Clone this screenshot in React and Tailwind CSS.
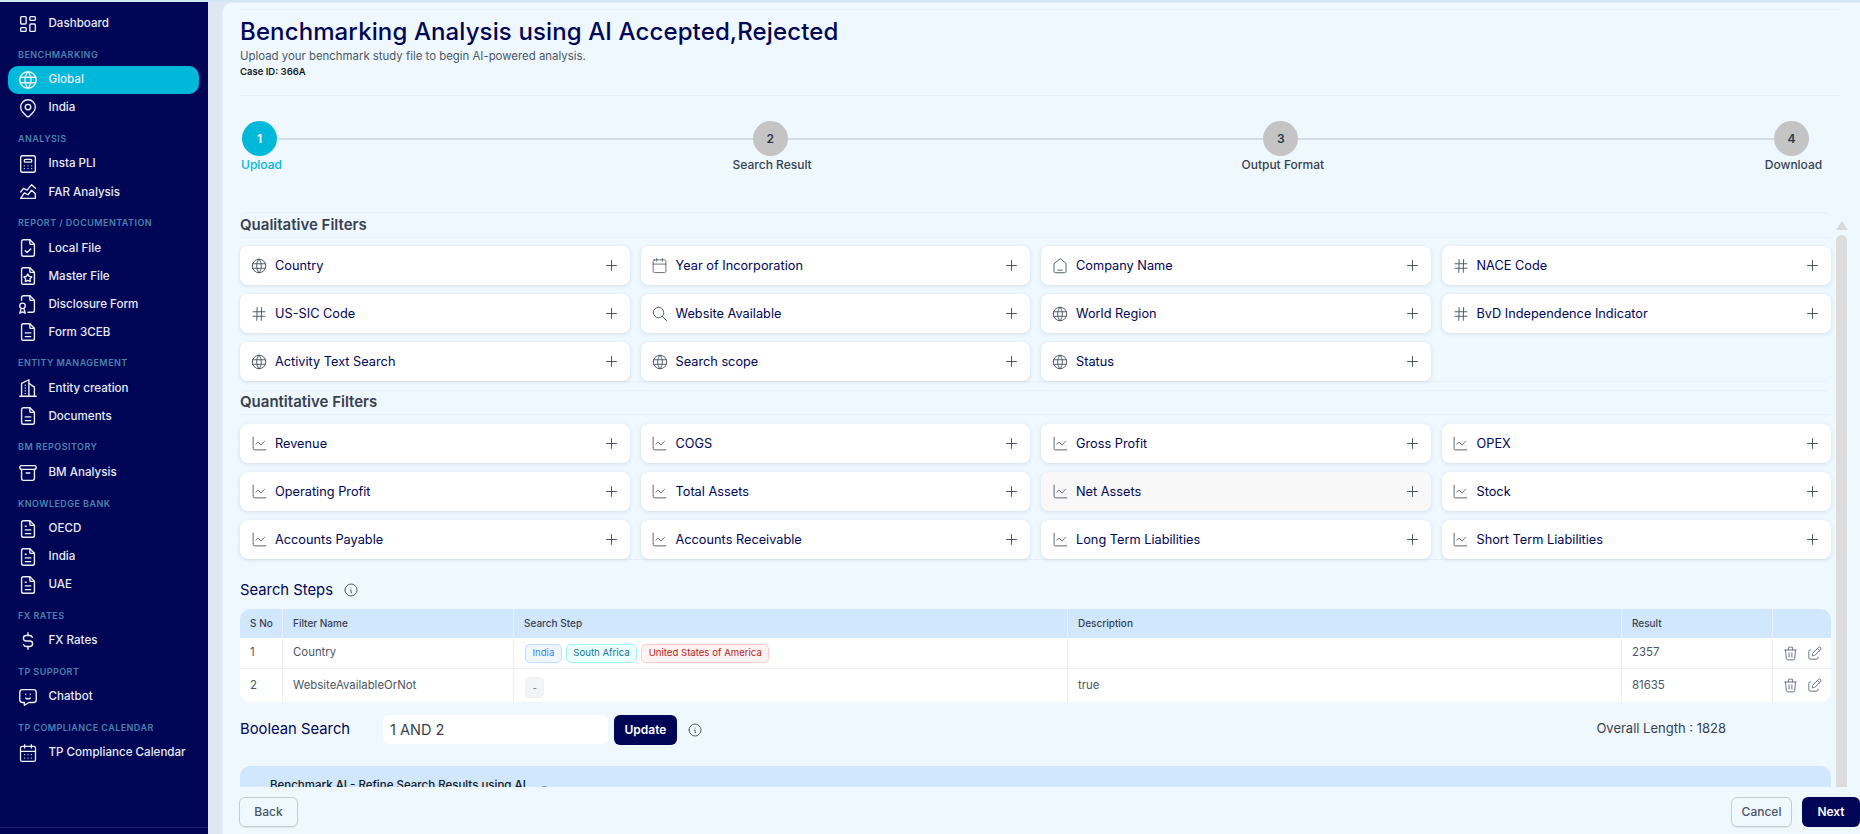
import {
  TbLayoutDashboard, TbWorld, TbMapPin, TbCalculator, TbChartAreaLine, TbFileCheck, TbFileStar,
  TbFileCertificate, TbFileDescription, TbBuildingSkyscraper, TbArchive, TbFileText, TbCurrencyDollar,
  TbMessageChatbot, TbSearch, TbPlus, TbTrash, TbEdit, TbInfoCircle, TbChevronDown,
} from "react-icons/tb";
import { Calendar, CalendarDays, ChartLine } from "lucide-react";

function HashIcon({ className }) {
  return (
    <svg width="18" height="18" viewBox="0 0 24 24" fill="none" stroke="currentColor" strokeWidth="1.25" strokeLinecap="round" className={className}>
      <path d="M4 9h16M4 15h16M9.5 3.5l-.5 17M15.5 3.5l-.5 17" />
    </svg>
  );
}

function HouseIcon({ className }) {
  return (
    <svg width="18" height="18" viewBox="0 0 24 24" fill="none" stroke="currentColor" strokeWidth="1.25" strokeLinejoin="round" strokeLinecap="round" className={className}>
      <path d="M12 2.5 4 9v10a2 2 0 0 0 2 2h12a2 2 0 0 0 2-2V9z" />
      <path d="M9 17.5h6" />
    </svg>
  );
}

function CalendarIcon({ className }) {
  return <Calendar size={17} strokeWidth={1.15} className={className} />;
}

function ChartIcon({ className }) {
  return <ChartLine size={17} strokeWidth={1.25} className={className} />;
}

function ComplianceIcon({ size, strokeWidth, className }) {
  return (
    <span className="w-[22px] h-[22px] shrink-0 flex items-center justify-center">
      <CalendarDays size={size - 2} strokeWidth={strokeWidth} className={className} />
    </span>
  );
}

const NAV = [
  { items: [{ label: "Dashboard", icon: TbLayoutDashboard }] },
  { title: "BENCHMARKING", items: [{ label: "Global", icon: TbWorld, active: true }, { label: "India", icon: TbMapPin }] },
  { title: "ANALYSIS", items: [{ label: "Insta PLI", icon: TbCalculator }, { label: "FAR Analysis", icon: TbChartAreaLine }] },
  {
    title: "REPORT / DOCUMENTATION",
    items: [
      { label: "Local File", icon: TbFileCheck },
      { label: "Master File", icon: TbFileStar },
      { label: "Disclosure Form", icon: TbFileCertificate },
      { label: "Form 3CEB", icon: TbFileDescription },
    ],
  },
  { title: "ENTITY MANAGEMENT", items: [{ label: "Entity creation", icon: TbBuildingSkyscraper }, { label: "Documents", icon: TbFileDescription }] },
  { title: "BM REPOSITORY", items: [{ label: "BM Analysis", icon: TbArchive }] },
  { title: "KNOWLEDGE BANK", items: [{ label: "OECD", icon: TbFileText }, { label: "India", icon: TbFileText }, { label: "UAE", icon: TbFileText }] },
  { title: "FX RATES", items: [{ label: "FX Rates", icon: TbCurrencyDollar }] },
  { title: "TP SUPPORT", items: [{ label: "Chatbot", icon: TbMessageChatbot }] },
  { title: "TP COMPLIANCE CALENDAR", items: [{ label: "TP Compliance Calendar", icon: ComplianceIcon }] },
];

const STEPS = [
  { n: 1, label: "Upload", active: true },
  { n: 2, label: "Search Result" },
  { n: 3, label: "Output Format" },
  { n: 4, label: "Download" },
];

const QUALITATIVE = [
  { label: "Country", icon: TbWorld },
  { label: "Year of Incorporation", icon: CalendarIcon },
  { label: "Company Name", icon: HouseIcon },
  { label: "NACE Code", icon: HashIcon },
  { label: "US-SIC Code", icon: HashIcon },
  { label: "Website Available", icon: TbSearch },
  { label: "World Region", icon: TbWorld },
  { label: "BvD Independence Indicator", icon: HashIcon },
  { label: "Activity Text Search", icon: TbWorld },
  { label: "Search scope", icon: TbWorld },
  { label: "Status", icon: TbWorld },
];

const QUANTITATIVE = [
  "Revenue", "COGS", "Gross Profit", "OPEX",
  "Operating Profit", "Total Assets", "Net Assets", "Stock",
  "Accounts Payable", "Accounts Receivable", "Long Term Liabilities", "Short Term Liabilities",
];

function Sidebar() {
  return (
    <aside className="w-[208px] shrink-0 h-full bg-[#000555] relative pt-[8px] pl-[8px] pr-[9px] font-['Inter',sans-serif]">
      {NAV.map((group, i) => (
        <div key={i}>
          {group.title && (
            <div className="h-[28.04px] pt-[11px] pl-[10px] text-[9px] leading-[12px] font-semibold tracking-[0.05em] text-[#4b82ad] whitespace-nowrap">
              {group.title}
            </div>
          )}
          {group.items.map((item) => {
            const Icon = item.icon;
            return (
              <div
                key={item.label}
                className={`h-[28.04px] flex items-center pl-[9px] rounded-[10px] ${item.active ? "bg-[#00b8d9]" : ""}`}
              >
                <Icon size={22} strokeWidth={1.5} className="text-[#eef1fa] shrink-0" />
                <span className="ml-[9.5px] text-[11.6px] font-medium text-[#e8ecf8] whitespace-nowrap">{item.label}</span>
              </div>
            );
          })}
        </div>
      ))}
      <div className="absolute left-0 right-0 bottom-[6px] h-px bg-[#1a2070]" />
    </aside>
  );
}

function Stepper() {
  return (
    <div className="relative w-[1567px] h-[60px] mt-[25px] ml-[19px]">
      <div className="absolute left-[18px] right-[18px] top-[17px] h-[2px] bg-[#d3dbe5]" />
      <div className="relative flex justify-between">
        {STEPS.map((s) => (
          <div key={s.n} className="flex flex-col items-center w-[35px]">
            <div
              className={`w-[35px] h-[35px] shrink-0 rounded-full flex items-center justify-center text-[12px] font-semibold ${
                s.active ? "bg-[#00b8d9] text-white" : "bg-[#c4c4c4] text-[#2d3748]"
              }`}
            >
              {s.n}
            </div>
            <div className={`ml-[4px] mt-[1px] text-[12px] leading-[16px] font-medium whitespace-nowrap ${s.active ? "text-[#00b8d9]" : "text-[#374151]"}`}>
              {s.label}
            </div>
          </div>
        ))}
      </div>
    </div>
  );
}

function FilterCard({ label, icon: Icon, hover }) {
  return (
    <div className={`h-[39px] rounded-[8px] flex items-center pl-[10px] pr-[10px] shadow-[0_1px_4px_rgba(15,40,90,0.12)] ${hover ? "bg-[#f8f8f8]" : "bg-white"}`}>
      <span className="w-[18px] h-[18px] flex items-center justify-center shrink-0 text-[#4b5563]">
        <Icon size={18} strokeWidth={1.25} />
      </span>
      <span className="ml-[7px] text-[12.75px] text-[#000555] whitespace-nowrap">{label}</span>
      <TbPlus size={17} strokeWidth={1.25} className="ml-auto text-[#374151]" />
    </div>
  );
}

function Pill({ className, children }) {
  return <span className={`px-[6.5px] inline-flex items-center rounded-[5px] border text-[9.6px] ${className}`}>{children}</span>;
}

function RowActions() {
  return (
    <div className="flex items-center gap-[6.5px] pl-[9px] text-[#64748b]">
      <TbTrash size={17} strokeWidth={1.4} />
      <TbEdit size={17} strokeWidth={1.4} />
    </div>
  );
}

function SearchSteps() {
  const th = "h-[29px] pl-[10px] text-left text-[10px] font-medium text-[#374151] border-r border-[#e8f2fb]";
  const td = "pl-[10px] text-[11.4px] text-[#4b5563] border-r border-[#eef1f4]";
  const pillCell = "pl-[11px] border-r border-[#eef1f4]";
  return (
    <table className="w-full table-fixed border-separate border-spacing-0 rounded-[10px] overflow-hidden bg-white">
      <colgroup>
        <col className="w-[43px]" />
        <col className="w-[231px]" />
        <col className="w-[554px]" />
        <col className="w-[554px]" />
        <col className="w-[151px]" />
        <col />
      </colgroup>
      <thead>
        <tr className="bg-[#d0e7fd]">
          <th className={th}>S No</th>
          <th className={th}>Filter Name</th>
          <th className={th}>Search Step</th>
          <th className={th}>Description</th>
          <th className={th}>Result</th>
          <th />
        </tr>
      </thead>
      <tbody>
        <tr className="h-[31px]">
          <td className={`${td} border-b`}>1</td>
          <td className={`${td} border-b`}>Country</td>
          <td className={`${pillCell} border-b`}>
            <div className="flex gap-[4px]">
              <Pill className="h-[19px] bg-[#eff6ff] border-[#bfdbfe] text-[#3b82f6]">India</Pill>
              <Pill className="h-[19px] bg-[#ecfeff] border-[#a5f3fc] text-[#0e7490]">South Africa</Pill>
              <Pill className="h-[19px] bg-[#fef2f2] border-[#fecaca] text-[#b91c1c]">United States of America</Pill>
            </div>
          </td>
          <td className={`${td} border-b`} />
          <td className={`${td} border-b`}>2357</td>
          <td className="border-b border-[#eef1f4]">
            <RowActions />
          </td>
        </tr>
        <tr className="h-[33px]">
          <td className={td}>2</td>
          <td className={td}>WebsiteAvailableOrNot</td>
          <td className={pillCell}>
            <Pill className="h-[21px] bg-[#f3f4f6] border-[#f0f0f0] text-[#6b7280]">-</Pill>
          </td>
          <td className={td}>true</td>
          <td className={td}>81635</td>
          <td>
            <RowActions />
          </td>
        </tr>
      </tbody>
    </table>
  );
}

export default function App() {
  return (
    <div className="h-[834px] w-[1860px] overflow-hidden font-['Inter',sans-serif]">
      <div className="h-[2px] bg-[#cfe8f2]" />
      <div className="flex h-[832px]">
        <Sidebar />
        <div className="flex-1 min-w-0 pl-[14px] bg-linear-to-r from-[#dfe7f2] to-[#edf5fc]">
          <main className="h-full bg-[#eff8ff] rounded-tl-[10px] border-l border-t border-[#e6eef6] flex flex-col">
            <div className="flex-1 min-h-0 overflow-hidden">
              <header className="ml-[17px] mr-[20px] mt-[6px] h-[87px] pt-[7px] border-y border-[#e8eff6]">
                <h1 className="text-[24px] leading-[30px] font-medium tracking-[0.12px] text-[#000555] whitespace-nowrap">Benchmarking Analysis using AI Accepted,Rejected</h1>
                <p className="mt-[2px] text-[11.4px] leading-[14px] text-[#4b5563]">Upload your benchmark study file to begin AI-powered analysis.</p>
                <p className="mt-[3px] text-[9.5px] leading-[12px] font-semibold text-[#111827]">Case ID: 366A</p>
              </header>
              <Stepper />
              <div className="flex mt-[31px] ml-[17px]">
                <div className="w-[1591px] shrink-0">
                  <section className="border border-[#e8eff6] rounded-[8px] border-x-0">
                    <div className="h-[25px] flex items-center border-b border-[#e8eff6] text-[15px] font-semibold text-[#374151]">Qualitative Filters</div>
                    <div className="grid grid-cols-4 gap-x-[11px] gap-y-[9px] pt-[8px]">
                      {QUALITATIVE.map((f) => <FilterCard key={f.label} {...f} />)}
                    </div>
                  </section>
                  <section className="mt-[8px] border border-[#e8eff6] rounded-[8px] border-x-0">
                    <div className="h-[24px] flex items-center border-b border-[#e8eff6] text-[15px] font-semibold text-[#374151]">Quantitative Filters</div>
                    <div className="grid grid-cols-4 gap-x-[11px] gap-y-[9px] pt-[9px]">
                      {QUANTITATIVE.map((label) => <FilterCard key={label} label={label} icon={ChartIcon} hover={label === "Net Assets"} />)}
                    </div>
                  </section>
                  <div className="mt-[20px] flex items-center h-[20px] text-[14.8px] text-[#000555]">
                    Search Steps
                    <TbInfoCircle size={16} strokeWidth={1.25} className="ml-[10px] text-[#374151]" />
                  </div>
                  <div className="mt-[9px]">
                    <SearchSteps />
                  </div>
                  <div className="mt-[12px] flex items-center h-[31px]">
                    <span className="w-[143px] text-[14.8px] text-[#000555]">Boolean Search</span>
                    <div className="w-[225px] h-[29px] bg-white rounded-[6px] pl-[7px] flex items-center text-[14.5px] text-[#374151]">1 AND 2</div>
                    <button className="ml-[6px] w-[63px] h-[30px] rounded-[6px] bg-[#000555] text-white text-[12px] font-semibold">Update</button>
                    <TbInfoCircle size={16} strokeWidth={1.25} className="ml-[10px] text-[#374151]" />
                    <span className="ml-auto mr-[105px] mb-[2px] text-[13px] text-[#374151]">Overall Length : 1828</span>
                  </div>
                  <div className="mt-[21px] h-[40px] rounded-t-[10px] bg-[#d0e7fd] flex items-start pl-[8px] pt-[12px]">
                    <TbChevronDown size={14} className="mt-[8px] text-[#374151]" />
                    <span className="ml-[8px] text-[11.5px] leading-[14px] font-medium text-[#111827] whitespace-nowrap">Benchmark AI - Refine Search Results using AI</span>
                    <TbInfoCircle size={13} strokeWidth={1.25} className="ml-[12px] mt-[7px] text-[#374151]" />
                  </div>
                </div>
                <div className="ml-[5px] w-[11px] shrink-0 flex flex-col items-center">
                  <div className="h-[23px] flex items-center pt-[4px]">
                    <div className="w-0 h-0 border-x-[6px] border-x-transparent border-b-[9px] border-b-[#d9d9d9]" />
                  </div>
                  <div className="w-full h-[600px] bg-[#dcdcdc] rounded-t-[6px]" />
                </div>
              </div>
            </div>
            <footer className="h-[47px] shrink-0 bg-[#eff8ff] flex items-start justify-between pt-[10px] pl-[16px]">
              <button className="w-[59px] h-[30px] rounded-[6px] border border-[#c4ccd6] text-[12px] font-medium text-[#4b5563] shadow-[0_1px_1px_rgba(0,0,0,0.08)]">Back</button>
              <div className="flex gap-[10px]">
                <button className="w-[61px] h-[30px] rounded-[6px] border border-[#c4ccd6] text-[12px] font-medium text-[#4b5563] shadow-[0_1px_1px_rgba(0,0,0,0.08)]">Cancel</button>
                <button className="w-[58px] h-[30px] rounded-[6px] bg-[#000555] text-[12px] font-semibold text-white">Next</button>
              </div>
            </footer>
          </main>
        </div>
      </div>
    </div>
  );
}
